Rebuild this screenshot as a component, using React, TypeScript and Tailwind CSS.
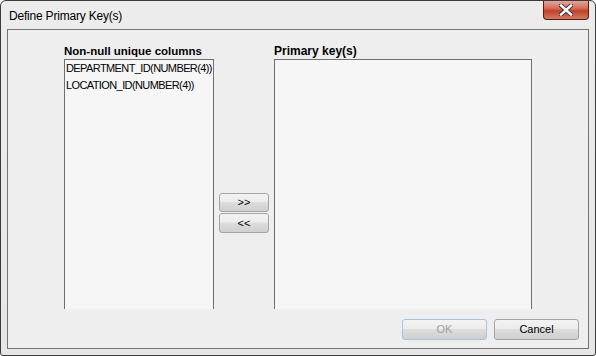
import React from "react";

const ui = { fontFamily: '"Liberation Sans", Arial, sans-serif' };
const tahoma = { fontFamily: '"Liberation Sans", Arial, sans-serif' };

/* Aero-style close glyph — white X with dark outline */
function CloseGlyph() {
  return (
    <svg width="14" height="12" viewBox="0 0 14 12" fill="none">
      <path d="M2 1.5 L12 10.5 M12 1.5 L2 10.5" stroke="#3b3b3b" strokeWidth="4.4" strokeLinecap="square" />
      <path d="M2 1.5 L12 10.5 M12 1.5 L2 10.5" stroke="#ffffff" strokeWidth="2.4" strokeLinecap="square" />
    </svg>
  );
}

function Btn({ label, disabled, w }: { label: string; disabled?: boolean; w: string }) {
  return (
    <div
      className={`${w} flex items-center justify-center rounded-[3px] border bg-[linear-gradient(#f3f3f3_0%,#ececec_45%,#dddddd_50%,#cfcfcf_100%)] text-[11px] ${
        disabled ? "border-[#a3c3e2] text-[#a0a0a0]" : "border-[#a5a5a5] text-black"
      }`}
      style={tahoma}
    >
      {label}
    </div>
  );
}

function ListBox({ w, items }: { w: string; items: string[] }) {
  return (
    <div className={`${w} h-[250px] border-x border-t border-[#707070] bg-[#f6f6f6] pl-[1px] pt-[1px]`}>
      {items.map((it) => (
        <div key={it} className="h-[17px] whitespace-nowrap text-[11px] leading-[15px] tracking-[-0.6px] text-black" style={tahoma}>
          {it}
        </div>
      ))}
    </div>
  );
}

export default function App() {
  return (
    <div className="h-[356px] w-[596px] overflow-hidden bg-white">
      <div className="flex h-[356px] w-[596px] flex-col rounded-t-[6px] rounded-b-[3px] border border-[#3a3a3a] bg-[linear-gradient(#ececec,#e6e6e6)]">
        {/* Title bar */}
        <div className="flex h-[28px] items-start">
          <div className="pl-[8px] pt-[8px] text-[12px] leading-[14px] tracking-[-0.2px] text-black" style={ui}>
            Define Primary Key(s)
          </div>
          <div className="ml-auto mr-[6px] flex h-[19px] w-[46px] items-center justify-center rounded-b-[4px] border border-t-0 border-[#5a1c12] bg-[linear-gradient(#e4a69b_0%,#d46e5a_40%,#c44027_55%,#d37a66_100%)]">
            <CloseGlyph />
          </div>
        </div>

        {/* Content frame */}
        <div className="mx-[6px] mb-[6px] flex flex-1 flex-col border border-[#747474] bg-[#eeeeee]">
          <div className="flex pl-[56px] pt-[15px]">
            <div className="flex w-[150px] flex-col">
              <div className="h-[14px] whitespace-nowrap text-[11.5px] font-bold leading-[13px] text-black" style={tahoma}>
                Non-null unique columns
              </div>
              <ListBox w="w-[150px]" items={["DEPARTMENT_ID(NUMBER(4))", "LOCATION_ID(NUMBER(4))"]} />
            </div>
            <div className="mx-[5px] flex w-[50px] flex-col gap-[1px] pt-[148px]">
              <div className="flex h-[19px]">
                <Btn label=">>" w="w-[50px]" />
              </div>
              <div className="flex h-[20px]">
                <Btn label="<<" w="w-[50px]" />
              </div>
            </div>
            <div className="flex w-[258px] flex-col">
              <div className="h-[14px] text-[12px] font-bold leading-[13px] text-black" style={tahoma}>
                Primary key(s)
              </div>
              <ListBox w="w-[258px]" items={[]} />
            </div>
          </div>
          <div className="mt-[10px] flex h-[21px] justify-end gap-[7px] pr-[9px]">
            <Btn label="OK" disabled w="w-[85px]" />
            <Btn label="Cancel" w="w-[85px]" />
          </div>
        </div>
      </div>
    </div>
  );
}
